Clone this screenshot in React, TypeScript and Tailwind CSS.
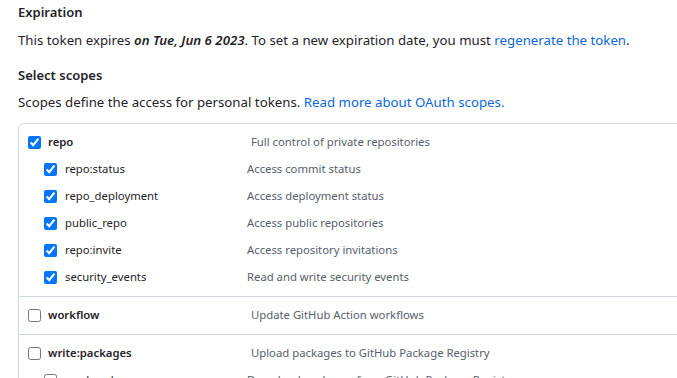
import React from "react";

const font = { fontFamily: '"Segoe UI", "Noto Sans", "Liberation Sans", sans-serif' };

function Row({ top, checked, label, desc }: { top?: boolean; checked?: boolean; label: string; desc: string }) {
  return (
    <div className="flex items-center h-[27px]">
      <div className={top ? "w-[232px] pl-[9px] flex items-center" : "w-[228px] pl-[25px] flex items-center"}>
        <input type="checkbox" defaultChecked={checked} className="m-0 w-[13px] h-[13px] shrink-0" />
        <span className={top ? "ml-[7px] font-semibold text-[11.3px] text-[#1f2328]" : "ml-[8px] text-[11.3px] text-[#1f2328]"}>{label}</span>
      </div>
      <div className="text-[11.3px] text-[#57606a] whitespace-nowrap">{desc}</div>
    </div>
  );
}

export default function App() {
  return (
    <div className="w-[677px] h-[378px] overflow-hidden bg-white pl-[18px]" style={font}>
      <div className="pt-[2px] text-[13px] font-semibold text-[#1f2328] leading-[21px]">Expiration</div>
      <p className="mt-[7px] text-[13.25px] text-[#1f2328] leading-[21px] whitespace-nowrap">
        This token expires <em className="font-semibold">on Tue, Jun 6 2023</em>. To set a new expiration date, you must{" "}
        <a className="text-[#0969da]">regenerate the token</a>.
      </p>
      <div className="mt-[14px] text-[13px] font-semibold text-[#1f2328] leading-[21px]">Select scopes</div>
      <p className="mt-[6px] text-[13.25px] text-[#1f2328] leading-[21px] whitespace-nowrap">
        Scopes define the access for personal tokens. <a className="text-[#0969da]">Read more about OAuth scopes.</a>
      </p>
      <div className="mt-[10px] w-[700px] border border-[#d0d7de] rounded-tl-[6px]">
        <div className="py-[5px]">
          <Row top checked label="repo" desc="Full control of private repositories" />
          <Row checked label="repo:status" desc="Access commit status" />
          <Row checked label="repo_deployment" desc="Access deployment status" />
          <Row checked label="public_repo" desc="Access public repositories" />
          <Row checked label="repo:invite" desc="Access repository invitations" />
          <Row checked label="security_events" desc="Read and write security events" />
        </div>
        <div className="py-[5px] border-t border-[#d0d7de]">
          <Row top label="workflow" desc="Update GitHub Action workflows" />
        </div>
        <div className="py-[5px] border-t border-[#d0d7de]">
          <Row top label="write:packages" desc="Upload packages to GitHub Package Registry" />
          <Row label="read:packages" desc="Download packages from GitHub Package Registry" />
        </div>
      </div>
    </div>
  );
}
